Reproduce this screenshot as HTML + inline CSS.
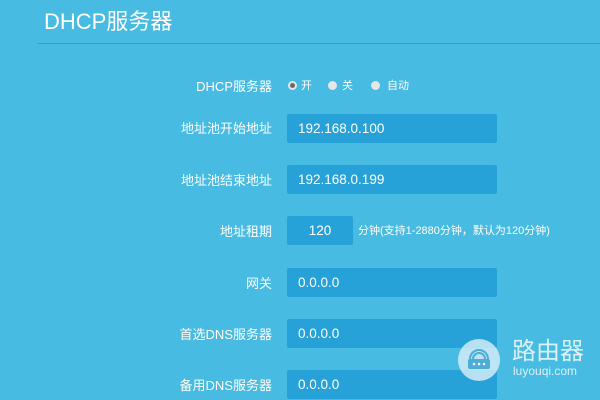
<!DOCTYPE html>
<html><head><meta charset="utf-8"><style>
body{margin:0;width:600px;height:400px;overflow:hidden;background:#47bbe2;font-family:"Liberation Sans","Noto Sans CJK SC",sans-serif;color:#fff;position:relative}
.a{position:absolute}
.lbl{position:absolute;right:328px;font-size:13px;line-height:15px;text-align:right;white-space:nowrap}
.inp{position:absolute;left:287px;width:210px;height:29px;background:#27a2d8;border-radius:2px;font-size:13.5px;line-height:29px;text-indent:11px}
.r{position:absolute;width:9px;height:9px;border-radius:50%;background:#e6e6e6;top:81px}
.t{position:absolute;top:79px;font-size:11px;line-height:14px}
</style></head><body>
<div class="a" style="left:44px;top:9px;font-size:22px;line-height:26px">DHCP服务器</div>
<div class="a" style="left:38px;top:43px;width:562px;height:1px;background:#2e9fd6"></div>

<div class="lbl" style="top:79px">DHCP服务器</div>
<div class="r" style="left:288px;background:#e6e6e6"><div style="position:absolute;left:2px;top:2px;width:5px;height:5px;border-radius:50%;background:#6a6a6a"></div></div>
<div class="t" style="left:301px">开</div>
<div class="r" style="left:328px"></div><div class="t" style="left:342px">关</div>
<div class="r" style="left:371px"></div><div class="t" style="left:387px">自动</div>

<div class="lbl" style="top:121px">地址池开始地址</div><div class="inp" style="top:114px">192.168.0.100</div>
<div class="lbl" style="top:173px">地址池结束地址</div><div class="inp" style="top:165px">192.168.0.199</div>
<div class="lbl" style="top:224px">地址租期</div><div class="inp" style="top:216px;width:66px;text-indent:0;text-align:center">120</div>
<div class="a" style="left:358px;top:224px;font-size:11px;line-height:14px">分钟(支持1-2880分钟，默认为120分钟)</div>
<div class="lbl" style="top:276px">网关</div><div class="inp" style="top:268px">0.0.0.0</div>
<div class="lbl" style="top:327px">首选DNS服务器</div><div class="inp" style="top:319px">0.0.0.0</div>
<div class="lbl" style="top:378px">备用DNS服务器</div><div class="inp" style="top:370px">0.0.0.0</div>

<div class="a" style="left:458px;top:339px;width:42px;height:42px;border-radius:50%;background:rgba(220,240,250,0.8)">
<svg width="42" height="42" viewBox="0 0 42 42"><g fill="none" stroke="#4aaed8" stroke-width="2"><path d="M15 20a6 6 0 0 1 12 0"/><path d="M12 20a9 9 0 0 1 18 0"/></g><rect x="10" y="20" width="22" height="10" rx="2" fill="#4aaed8"/><g fill="#fff"><circle cx="16" cy="25" r="1.3"/><circle cx="21" cy="25" r="1.3"/><circle cx="26" cy="25" r="1.3"/></g></svg></div>
<div class="a" style="left:512px;top:338px;font-size:24px;line-height:28px;color:rgba(235,248,255,0.9)">路由器</div>
<div class="a" style="left:513px;top:364px;font-size:12px;line-height:14px;color:rgba(235,248,255,0.9)">luyouqi.com</div>
</body></html>
